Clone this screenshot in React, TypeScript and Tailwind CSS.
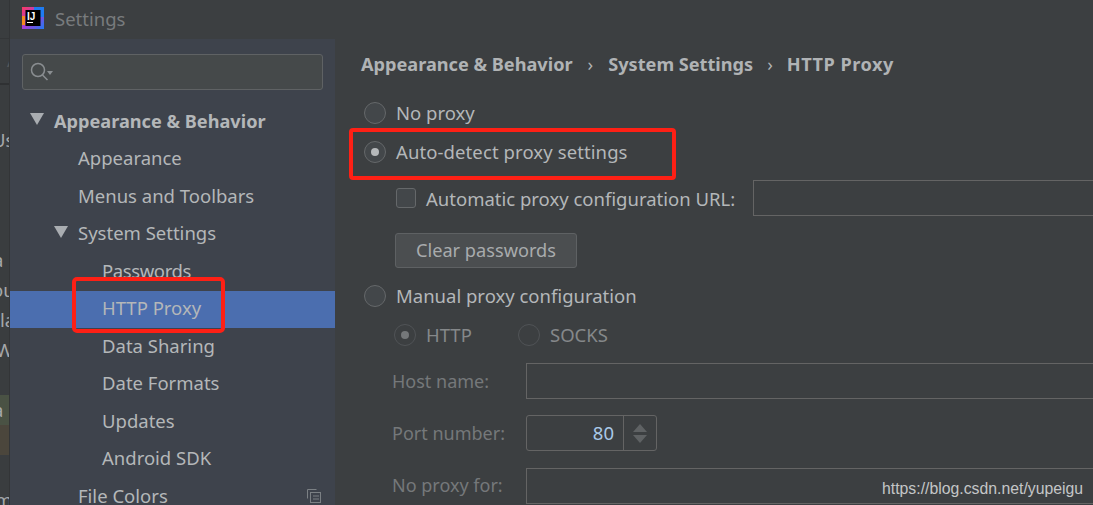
const uiFont = "font-['Noto_Sans','Open_Sans',sans-serif]";

type RowProps = {
  label: string;
  indent: number;
  bold?: boolean;
  arrow?: boolean;
  selected?: boolean;
  icon?: boolean;
  labelClass?: string;
};

function Row({ label, indent, bold, arrow, selected, icon, labelClass = "" }: RowProps) {
  return (
    <div
      className={`flex h-[37.5px] items-center pr-[14px] ${selected ? "mt-[1px] -mb-[1px] bg-[#4b6eaf] pb-[2px]" : ""} ${bold ? "text-[18.15px] font-bold" : ""}`}
      style={{ paddingLeft: indent }}
    >
      {arrow && (
        <svg width="14" height="12" viewBox="0 0 14 12" className="mr-[10px] -ml-[24px] -mt-[3px]">
          <path d="M0 0h14L7 12z" fill="#a9adb1" />
        </svg>
      )}
      <span className={`flex-1 whitespace-nowrap ${labelClass}`}>{label}</span>
      {icon && (
        <svg width="14" height="14" viewBox="0 0 14 14" fill="none" stroke="#7b8084" strokeWidth="1">
          <path d="M.5 9.5v-9h9" />
          <rect x="3.5" y="3.5" width="10" height="10" />
          <path d="M6 7h6M6 10h6" />
        </svg>
      )}
    </div>
  );
}

function Radio({ checked, dim }: { checked?: boolean; dim?: boolean }) {
  return (
    <span
      className={`flex size-[22px] shrink-0 items-center justify-center rounded-full border-[1.5px] ${
        dim ? "border-[#505356]" : "border-[#65686a] bg-[#43474a]"
      }`}
    >
      {checked && <span className={`size-[8px] rounded-full ${dim ? "bg-[#75787a]" : "bg-[#b5b8ba]"}`} />}
    </span>
  );
}

function FieldRow({ label, className, children }: { label: string; className: string; children: React.ReactNode }) {
  return (
    <div className={`flex items-center ${className}`}>
      <span className="w-[139px] shrink-0 pl-[5px] text-[18px] text-[#75787a]">{label}</span>
      {children}
    </div>
  );
}

export default function App() {
  return (
    <div className={`${uiFont} relative flex h-[505px] w-[1093px] overflow-hidden bg-[#3c3f41] text-[18.5px] text-[#b4b7b9]`}>
      {/* IDE window peeking out behind the dialog */}
      <div className="w-[10px] shrink-0 overflow-hidden border-r border-[#333537] bg-[#3a3d3f] text-[#a5a8aa]">
        <div className="h-[39px] border-b border-[#343638]" />
        <div className="h-[46px] border-b-2 border-[#2f3133] pl-[7px] pt-[6px] leading-[30px] text-[#55585a]">A</div>
        <div className="h-[41px]" />
        <div className="-ml-[8px] h-[28px] whitespace-nowrap leading-[28px]">Us</div>
        <div className="h-[91px]" />
        <div className="-ml-[7px] h-[30px] whitespace-nowrap leading-[30px]">a</div>
        <div className="-ml-[8px] h-[30px] whitespace-nowrap leading-[30px]">ou</div>
        <div className="h-[30px] whitespace-nowrap leading-[30px]">la</div>
        <div className="-ml-[4px] h-[30px] whitespace-nowrap leading-[30px]">W</div>
        <div className="h-[30px]" />
        <div className="h-[30px] whitespace-nowrap bg-[#4a5244] leading-[30px]">
          <span className="-ml-[7px] block">a</span>
        </div>
        <div className="h-[30px] bg-[#4b463c]" />
        <div className="h-[30px]" />
        <div className="-ml-[5px] whitespace-nowrap leading-[30px]">m</div>
      </div>

      <div className="flex min-w-0 flex-1 flex-col">
        <div className="flex h-[39px] shrink-0 items-center pb-[2px] pl-[12px] text-[#787b7d]">
          <svg width="22" height="22" viewBox="0 0 22 22" className="mr-[11px] -mt-[1px]">
            <defs>
              <linearGradient id="ij" x1="0" y1="0" x2="1" y2="1">
                <stop offset="0" stopColor="#fc3a5e" />
                <stop offset="0.5" stopColor="#a43cd8" />
                <stop offset="1" stopColor="#1f7bf2" />
              </linearGradient>
            </defs>
            <rect width="22" height="22" fill="url(#ij)" />
            <rect x="12" y="0" width="10" height="10" fill="#1f7bf2" />
            <rect x="0" y="9" width="3" height="9" fill="#f58a1f" />
            <rect x="3.5" y="3" width="15" height="16" fill="#000" />
            <rect x="5" y="15" width="6" height="1" fill="#fff" />
            <text x="5" y="12.5" fontSize="10" fontWeight="700" fill="#fff" fontFamily="'Liberation Sans', sans-serif">IJ</text>
          </svg>
          Settings
        </div>

        <div className="flex min-h-0 flex-1">
          <aside className="w-[325px] shrink-0 bg-[#3e434c] pt-[15px]">
            <div className="mx-[12px] mb-[12px] flex h-[36px] w-[301px] items-center rounded-[3px] border-[1.5px] border-[#5f6264] bg-[#45494a] pl-[7px]">
              <svg width="24" height="22" viewBox="0 0 24 22" fill="none" stroke="#8a8e91" strokeWidth="1.5">
                <circle cx="8" cy="9" r="6.5" />
                <path d="M12.5 14l5 5" />
                <path d="M17 10h6l-3 4z" fill="#8a8e91" stroke="none" />
              </svg>
            </div>
            <Row label="Appearance & Behavior" indent={44} bold arrow labelClass="pt-[2px]" />
            <Row label="Appearance" indent={68} />
            <Row label="Menus and Toolbars" indent={68} />
            <Row label="System Settings" indent={68} arrow />
            <Row label="Passwords" indent={92} labelClass="tracking-[-0.4px]" />
            <Row label="HTTP Proxy" indent={92} selected />
            <Row label="Data Sharing" indent={92} />
            <Row label="Date Formats" indent={92} />
            <Row label="Updates" indent={92} />
            <Row label="Android SDK" indent={92} />
            <Row label="File Colors" indent={68} icon />
          </aside>

          <main className="min-w-0 flex-1 pl-[26px]">
            <div className="flex h-[50px] items-center pt-[2px] text-[18.15px] font-bold text-[#b0b3b5]">
              <span>Appearance &amp; Behavior</span>
              <span className="mx-[15px] font-normal">›</span>
              <span>System Settings</span>
              <span className="mx-[14px] font-normal">›</span>
              <span className="tracking-[0.5px]">HTTP Proxy</span>
            </div>

            <div className="mt-[10px] flex h-[28px] items-center gap-[10px] pl-[3px]">
              <Radio />
              No proxy
            </div>
            <div className="mt-[11px] flex h-[28px] items-center gap-[10px] pl-[3px]">
              <Radio checked />
              <span className="tracking-[0.1px]">Auto-detect proxy settings</span>
            </div>

            <div className="mt-[14px] flex h-[36px] items-center pl-[35px]">
              <span className="mr-[10px] size-[20px] shrink-0 rounded-[3px] border-[1.5px] border-[#65686a] bg-[#43474a]" />
              <span className="mr-[18px] mt-[2px] whitespace-nowrap">Automatic proxy configuration URL:</span>
              <span className="h-[36px] min-w-0 flex-1 border border-r-0 border-[#646464]" />
            </div>

            <div className="ml-[34px] mt-[17px] flex h-[35px] w-[182px] items-center justify-center rounded-[3px] border-[1.5px] border-[#5e6163] bg-[#4b4e50] pt-[1px] text-[18.2px] text-[#a8abad]">
              Clear passwords
            </div>

            <div className="mt-[14px] flex h-[28px] items-center gap-[10px] pl-[3px]">
              <Radio />
              Manual proxy configuration
            </div>

            <div className="mt-[11px] flex h-[28px] items-center pl-[33px] text-[#85888a]">
              <Radio checked dim />
              <span className="ml-[10px] w-[92px]">HTTP</span>
              <Radio dim />
              <span className="ml-[10px]">SOCKS</span>
            </div>

            <FieldRow label="Host name:" className="mt-[14px] h-[36px] pl-[26px]">
              <span className="h-[36px] min-w-0 flex-1 border border-r-0 border-[#646464]" />
            </FieldRow>

            <FieldRow label="Port number:" className="mt-[16px] h-[36px] pl-[26px]">
              <span className="flex h-[36px] w-[131px] rounded-[3px] border-[1.5px] border-[#646464]">
                <span className="flex-1 border-r border-[#646464] pr-[9px] text-right leading-[34px] text-[#a9c9e8]">80</span>
                <span className="flex w-[32px] flex-col items-center justify-center gap-[3px]">
                  <svg width="14" height="8" viewBox="0 0 14 8"><path d="M7 0l7 8H0z" fill="#5f6264" /></svg>
                  <svg width="14" height="8" viewBox="0 0 14 8"><path d="M0 0h14L7 8z" fill="#5f6264" /></svg>
                </span>
              </span>
            </FieldRow>

            <FieldRow label="No proxy for:" className="mt-[17px] h-[36px] pb-[1px] pl-[26px]">
              <span className="h-[36px] min-w-0 flex-1 border border-r-0 border-[#646464]" />
            </FieldRow>
          </main>
        </div>
      </div>

      {/* blog watermark and the red marks drawn over the screenshot */}
      <span className="absolute left-[882px] top-[477px] whitespace-nowrap font-['Liberation_Sans',sans-serif] text-[15.8px] text-[#c4c6c7]">
        https://blog.csdn.net/yupeigu
      </span>
      <span className="absolute left-[349px] top-[128px] h-[52px] w-[327px] rounded-[4px] border-[4px] border-[#fe2015]" />
      <span className="absolute left-[72px] top-[277px] h-[56px] w-[153px] rounded-[5px] border-[4px] border-[#fe2015]" />
    </div>
  );
}
